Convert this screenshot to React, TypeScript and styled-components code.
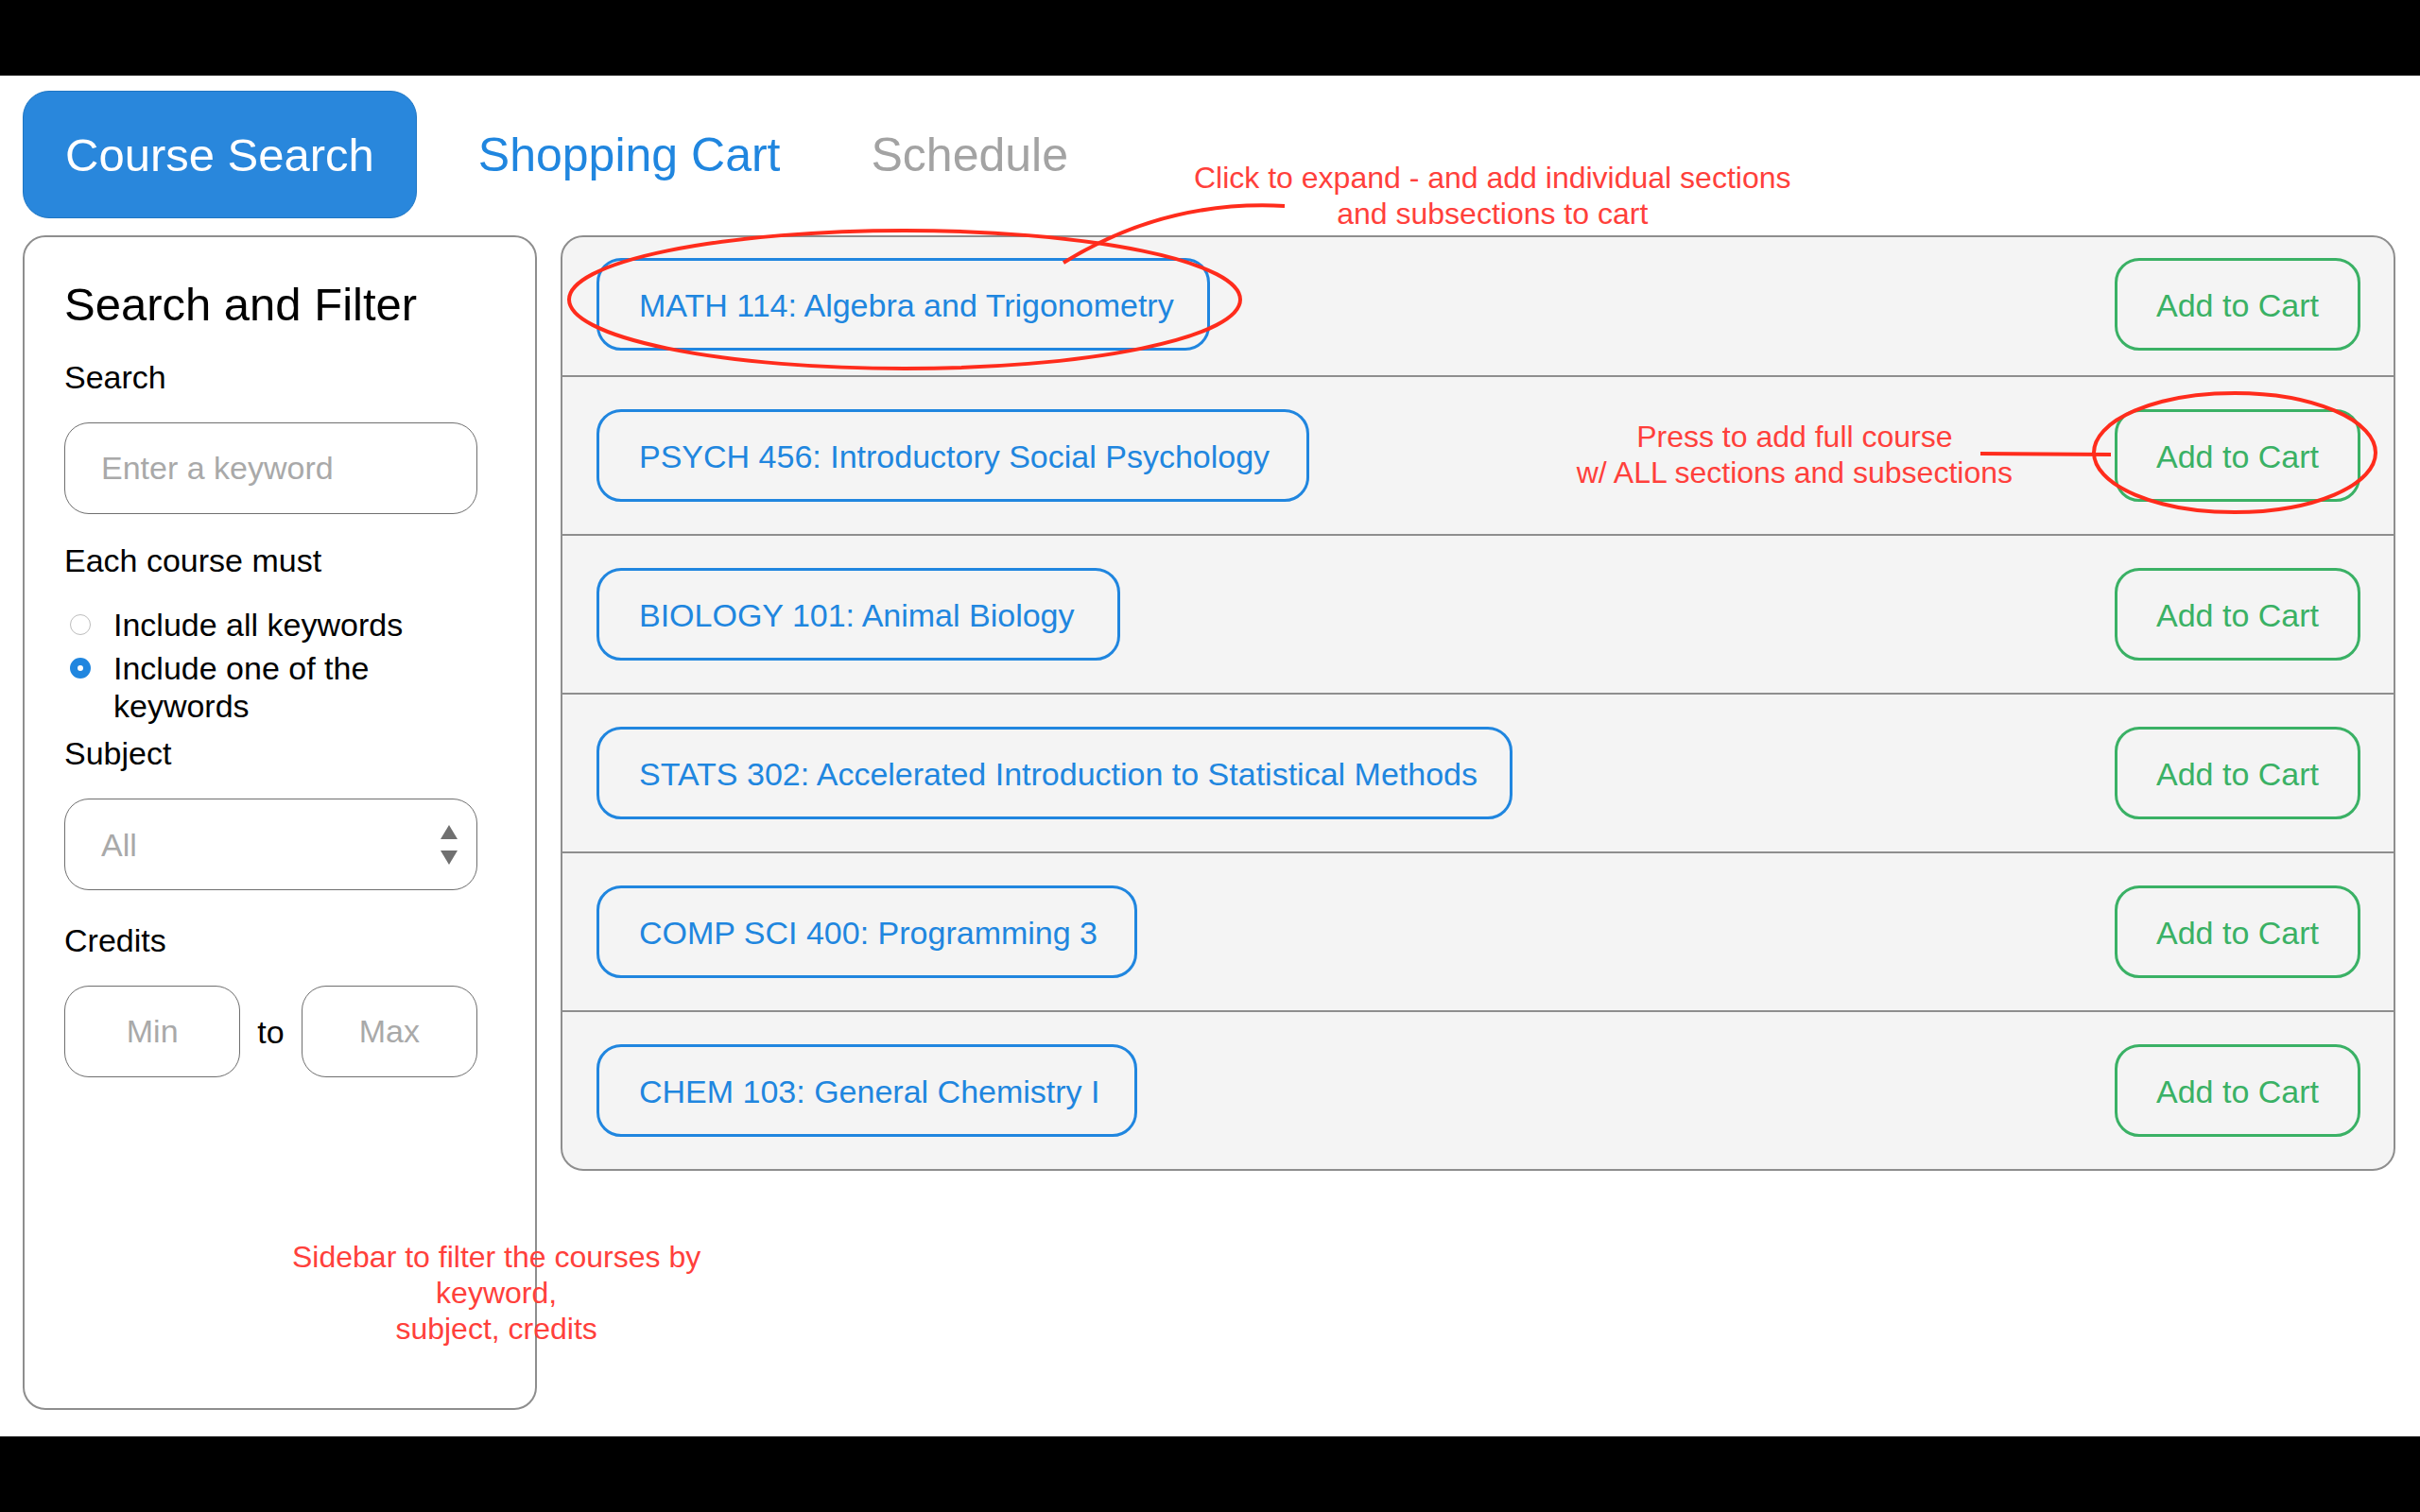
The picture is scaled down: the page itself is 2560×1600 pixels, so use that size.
import React from "react";
import styled, { createGlobalStyle } from "styled-components";

const color = {
  blue: "#2086df",
  tab: "#2987dc",
  tabEdge: "#1f76c3",
  green: "#3ab165",
  line: "#8e8e8e",
  edge: "#6f6f6f",
  muted: "#a9a9a9",
  panel: "#f4f4f4",
  mark: "#ff2c1c",
  note: "#ff403b",
};

const GlobalStyle = createGlobalStyle`
  *, *::before, *::after { box-sizing: border-box; }
  body {
    margin: 0;
    background: #000;
    color: #000;
    font-family: "Liberation Sans", Helvetica, Arial, sans-serif;
    font-size: 34px;
    line-height: 40px;
  }
  button, input, select { font: inherit; color: inherit; margin: 0; }
`;

const Screen = styled.div`
  display: flex;
  min-height: 100vh;
  padding: 80px 0;
`;

const Sheet = styled.div`
  flex: 1;
  display: flex;
  flex-direction: column;
  gap: 18px;
  padding: 16px 26px 28px 24px;
  background: #fff;
`;

const Tabs = styled.nav`
  display: flex;
  gap: 6px;
`;

const Tab = styled.a<{ $tone: "active" | "link" | "muted" }>`
  padding: 39px 44px 37px;
  margin-right: ${(p) => (p.$tone === "active" ? "14px" : "0")};
  border: 1px solid ${(p) => (p.$tone === "active" ? color.tabEdge : "transparent")};
  border-radius: 28px;
  background: ${(p) => (p.$tone === "active" ? color.tab : "transparent")};
  color: ${(p) => ({ active: "#fff", link: color.blue, muted: "#a3a3a3" })[p.$tone]};
  font-size: ${(p) => (p.$tone === "active" ? "49px" : "50px")};
  line-height: 57px;
  text-decoration: none;
`;

const Columns = styled.div`
  flex: 1;
  display: grid;
  grid-template-columns: 544px minmax(0, 1fr);
  gap: 25px;
  align-items: start;
`;

const Sidebar = styled.aside`
  position: relative;
  align-self: stretch;
  padding: 43px 61px 43px 42px;
  border: 2px solid ${color.line};
  border-radius: 24px;
`;

const Title = styled.h1`
  margin: 0 0 29px;
  font-size: 49px;
  font-weight: 400;
  line-height: 56px;
`;

const Field = styled.div<{ $space: number }>`
  display: flex;
  flex-direction: column;
  gap: 28px;
  margin-bottom: ${(p) => p.$space}px;
`;

const RadioGroup = styled.fieldset`
  min-width: 0;
  margin: 0 0 10px;
  padding: 0;
  border: 0;
`;

const Legend = styled.legend`
  padding: 0;
  margin-bottom: 28px;
`;

const RadioLabel = styled.label`
  display: flex;
  align-items: flex-start;
  gap: 24px;
  padding-left: 6px;
  & + & { margin-top: 6px; }
`;

const Radio = styled.input`
  appearance: none;
  flex: none;
  width: 22px;
  height: 22px;
  margin: 9px 0 0;
  border: 1px solid #bdbdbd;
  border-radius: 50%;
  background: #fff;
  &:checked { border: 8px solid ${color.blue}; }
`;

const TextBox = styled.input`
  width: 100%;
  min-width: 0;
  height: 97px;
  padding: 0 38px;
  border: 1px solid ${color.edge};
  border-radius: 26px;
  background: #fff;
  &::placeholder { color: ${color.muted}; opacity: 1; }
`;

const NumberBox = styled(TextBox)`
  flex: 1;
  padding: 0 8px;
  text-align: center;
`;

const SelectWrap = styled.div`
  position: relative;
`;

const SelectBox = styled.select`
  appearance: none;
  display: block;
  width: 100%;
  height: 97px;
  padding: 0 38px;
  border: 1px solid ${color.edge};
  border-radius: 26px;
  background: #fff;
  color: ${color.muted};
`;

const SelectArrows = styled.svg`
  position: absolute;
  right: 21px;
  top: 28px;
  pointer-events: none;
`;

const Range = styled.div`
  display: flex;
  align-items: center;
  gap: 18px;
`;

const Results = styled.ul`
  list-style: none;
  margin: 0;
  padding: 0;
  border: 2px solid ${color.line};
  border-radius: 24px;
  background: ${color.panel};
`;

const Row = styled.li`
  display: flex;
  align-items: center;
  justify-content: space-between;
  padding: 34px 35px 34px 36px;
  & + & { border-top: 2px solid ${color.line}; }
  &:first-child { padding-top: 22px; padding-bottom: 26px; }
`;

const Anchor = styled.div`
  position: relative;
`;

const Pill = styled.button`
  display: block;
  height: 98px;
  padding: 2px 0 0;
  border: 3px solid currentColor;
  border-radius: 26px;
  background: transparent;
  white-space: nowrap;
`;

const CourseButton = styled(Pill)<{ $width: number }>`
  width: ${(p) => p.$width}px;
  padding-left: 42px;
  color: ${color.blue};
  text-align: left;
`;

const AddButton = styled(Pill)`
  width: 260px;
  color: ${color.green};
`;

const Note = styled.p`
  position: absolute;
  margin: 0;
  color: ${color.note};
  font-size: 32px;
  line-height: 38px;
  text-align: center;
  white-space: nowrap;
  pointer-events: none;
`;

const ExpandNote = styled(Note)`
  left: 632px;
  top: -104px;
`;

const AddNote = styled(Note)`
  right: 368px;
  top: 10px;
`;

const SidebarNote = styled(Note)`
  left: 283px;
  bottom: 65px;
`;

const Marks = styled.svg`
  position: absolute;
  overflow: visible;
  pointer-events: none;
  fill: none;
  stroke: ${color.mark};
  stroke-width: 4px;
`;

const ExpandMarks = styled(Marks)`
  left: -31px;
  top: -64px;
`;

const AddMarks = styled(Marks)`
  right: -18px;
  top: -19px;
`;

type Course = { name: string; width: number; note?: "expand" | "add" };

const courses: Course[] = [
  { name: "MATH 114: Algebra and Trigonometry", width: 649, note: "expand" },
  { name: "PSYCH 456: Introductory Social Psychology", width: 754, note: "add" },
  { name: "BIOLOGY 101: Animal Biology", width: 554 },
  { name: "STATS 302: Accelerated Introduction to Statistical Methods", width: 969 },
  { name: "COMP SCI 400: Programming 3", width: 572 },
  { name: "CHEM 103: General Chemistry I", width: 572 },
];

function ExpandCallout() {
  return (
    <>
      <ExpandNote>
        Click to expand - and add individual sections
        <br />
        and subsections to cart
      </ExpandNote>
      <ExpandMarks width="760" height="184" viewBox="0 0 760 184" aria-hidden="true">
        <ellipse cx="357" cy="108" rx="355" ry="73" />
        <path d="M525 69 Q633 2 759 9" />
      </ExpandMarks>
    </>
  );
}

function AddCallout() {
  return (
    <>
      <AddNote>
        Press to add full course
        <br />
        w/ ALL sections and subsections
      </AddNote>
      <AddMarks width="420" height="130" viewBox="0 0 420 130" aria-hidden="true">
        <ellipse cx="269" cy="65" rx="149" ry="63" />
        <path d="M0 66 L138 67" />
      </AddMarks>
    </>
  );
}

function Filters() {
  return (
    <Sidebar>
      <Title>Search and Filter</Title>
      <Field $space={29}>
        <label htmlFor="keyword">Search</label>
        <TextBox id="keyword" type="text" placeholder="Enter a keyword" />
      </Field>
      <RadioGroup>
        <Legend>Each course must</Legend>
        <RadioLabel>
          <Radio type="radio" name="match" value="all" />
          Include all keywords
        </RadioLabel>
        <RadioLabel>
          <Radio type="radio" name="match" value="one" defaultChecked />
          Include one of the keywords
        </RadioLabel>
      </RadioGroup>
      <Field $space={33}>
        <label htmlFor="subject">Subject</label>
        <SelectWrap>
          <SelectBox id="subject" defaultValue="all">
            <option value="all">All</option>
          </SelectBox>
          <SelectArrows width="18" height="42" viewBox="0 0 18 42" fill="#707070" aria-hidden="true">
            <path d="M9 0 L18 15 H0 Z" />
            <path d="M9 42 L18 27 H0 Z" />
          </SelectArrows>
        </SelectWrap>
      </Field>
      <Field $space={0}>
        <label htmlFor="credits-min">Credits</label>
        <Range>
          <NumberBox id="credits-min" type="text" inputMode="numeric" placeholder="Min" />
          <label htmlFor="credits-max">to</label>
          <NumberBox id="credits-max" type="text" inputMode="numeric" placeholder="Max" />
        </Range>
      </Field>
      <SidebarNote>
        Sidebar to filter the courses by
        <br />
        keyword,
        <br />
        subject, credits
      </SidebarNote>
    </Sidebar>
  );
}

export default function App() {
  return (
    <>
      <GlobalStyle />
      <Screen>
        <Sheet>
          <Tabs>
            <Tab href="#search" $tone="active">Course Search</Tab>
            <Tab href="#cart" $tone="link">Shopping Cart</Tab>
            <Tab href="#schedule" $tone="muted">Schedule</Tab>
          </Tabs>
          <Columns>
            <Filters />
            <Results>
              {courses.map((course) => (
                <Row key={course.name}>
                  <Anchor>
                    <CourseButton type="button" $width={course.width}>{course.name}</CourseButton>
                    {course.note === "expand" && <ExpandCallout />}
                  </Anchor>
                  <Anchor>
                    <AddButton type="button">Add to Cart</AddButton>
                    {course.note === "add" && <AddCallout />}
                  </Anchor>
                </Row>
              ))}
            </Results>
          </Columns>
        </Sheet>
      </Screen>
    </>
  );
}
